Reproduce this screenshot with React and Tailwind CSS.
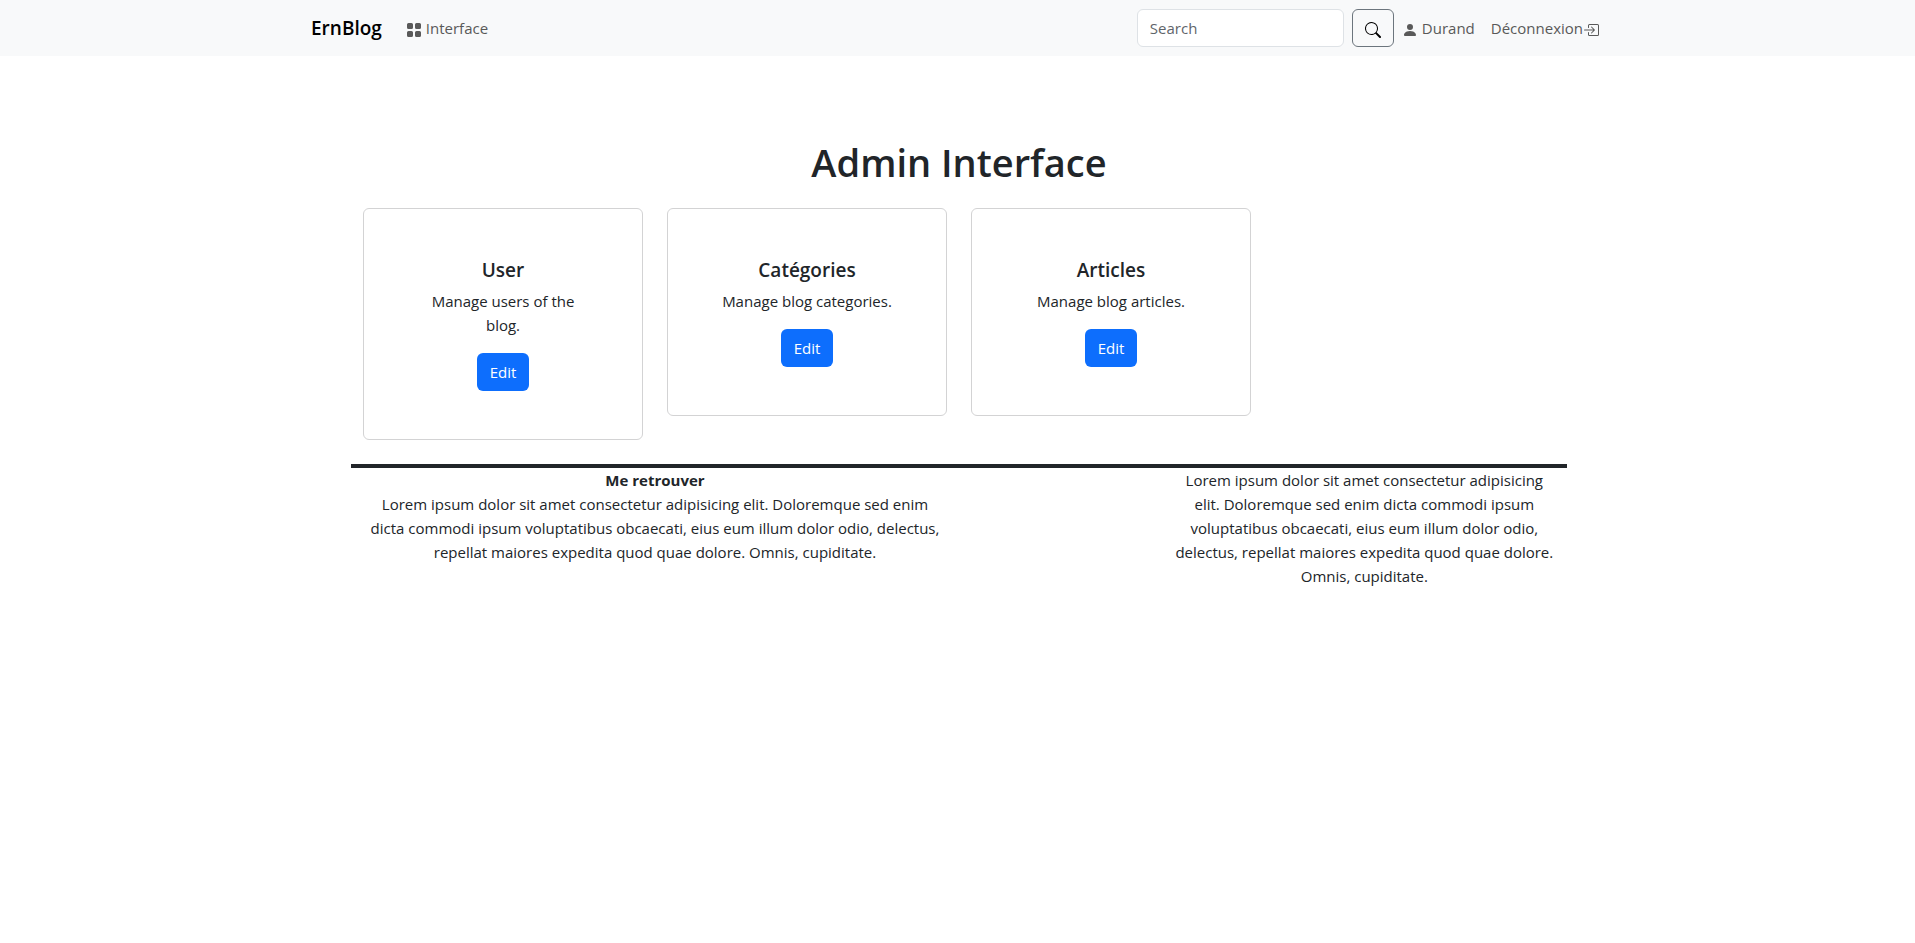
import { BsBoxArrowInRight, BsGridFill, BsPersonFill, BsSearch } from "react-icons/bs";

const cards = [
  { title: "User", text: "Manage users of the blog." },
  { title: "Catégories", text: "Manage blog categories." },
  { title: "Articles", text: "Manage blog articles." },
];

const lorem =
  "Lorem ipsum dolor sit amet consectetur adipisicing elit. Doloremque sed enim dicta commodi ipsum voluptatibus obcaecati, eius eum illum dolor odio, delectus, repellat maiores expedita quod quae dolore. Omnis, cupiditate.";

function Navbar() {
  return (
    <header className="bg-[#f8f9fa] py-2 pl-[3px]">
      <nav className="mx-auto flex max-w-[1320px] flex-wrap items-center px-3 text-[#595959]">
        <a href="#" className="mr-4 text-[19px] leading-[30px] font-semibold text-black">
          ErnBlog
        </a>
        <a href="#interface" className="flex items-center gap-1 px-2 py-2 leading-6">
          <BsGridFill className="mt-1 size-4" aria-hidden="true" />
          Interface
        </a>
        <form className="ml-auto flex gap-2" role="search" onSubmit={(e) => e.preventDefault()}>
          <input
            type="search"
            placeholder="Search"
            aria-label="Search"
            className="h-[38px] w-[207px] rounded-md border border-[#dee2e6] bg-white px-3 leading-6 text-[#212529] placeholder:text-[#5f656b]"
          />
          <button
            type="submit"
            aria-label="Search"
            className="flex h-[38px] items-center rounded-md border border-[#6c757d] px-3 text-black"
          >
            <BsSearch className="mt-1 size-4" aria-hidden="true" />
          </button>
        </form>
        <a href="#profile" className="flex items-center gap-1 px-2 leading-6">
          <BsPersonFill className="mt-1 size-4" aria-hidden="true" />
          Durand
        </a>
        <a href="#logout" className="flex items-center px-2 leading-6">
          Déconnexion
          <BsBoxArrowInRight className="mt-1 size-4" aria-hidden="true" />
        </a>
      </nav>
    </header>
  );
}

function Card({ title, text }) {
  return (
    <article className="rounded-md border border-[#d3d3d4] bg-white px-[52px] py-12">
      <h2 className="mb-1.5 text-[19px] leading-[26px] font-semibold">{title}</h2>
      <p className="mb-4">{text}</p>
      <button type="button" className="h-[38px] rounded-md bg-[#0d6efd] px-[13px] text-white">
        Edit
      </button>
    </article>
  );
}

export default function App() {
  return (
    <div className="min-h-screen bg-white font-['Open_Sans','Noto_Sans',sans-serif] text-[15px] leading-6 text-[#212529]">
      <Navbar />
      <div className="pt-20 pl-[3px] text-center">
        <div className="mx-auto max-w-[1216px]">
          <main>
            <h1 className="mb-5 text-[38px] leading-[52px] font-semibold">Admin Interface</h1>
            <div className="mb-6 grid grid-cols-4 items-start gap-6 px-3">
              {cards.map((card) => (
                <Card key={card.title} {...card} />
              ))}
            </div>
          </main>
          <footer className="grid grid-cols-6 border-t-4 border-[#212529]">
            <div className="col-span-3 px-4">
              <h2 className="font-bold">Me retrouver</h2>
              <p>{lorem}</p>
            </div>
            <p className="col-span-2 col-start-5 px-3">{lorem}</p>
          </footer>
        </div>
      </div>
    </div>
  );
}
